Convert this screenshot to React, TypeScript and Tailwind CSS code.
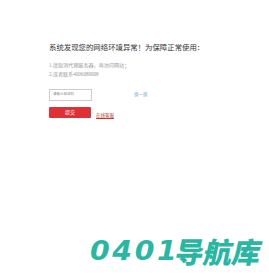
export default function App() {
  return (
    <div className="relative w-[269px] h-[274px] bg-white overflow-hidden" style={{ fontFamily: '"Liberation Serif", "Noto Sans CJK SC", serif' }}>
      <div className="pl-[49px] pt-[42px] flex flex-col">
        <div className="text-[7.4px] leading-[10px] text-[#333]" style={{ fontFamily: '"Noto Sans CJK SC", sans-serif' }}>
          系统发现您的网络环境异常！为保障正常使用：
        </div>
        <div className="mt-[9px] text-[5.1px] leading-[9px] text-[#999]">1.请取消代理服务器，再访问网站；</div>
        <div className="text-[5.1px] leading-[9px] text-[#999]">2.或者联系4006089008</div>
        <div className="mt-[10px] flex items-end">
          <div className="w-[43px] h-[12px] border border-[#ccc] flex items-center pl-[3px] text-[3.5px] text-[#888]">请输入验证码</div>
          <div className="ml-[42px] mb-[2px] text-[4.5px] text-[#7fadcc]">换一换</div>
        </div>
        <div className="mt-[6px] flex items-end">
          <div className="w-[42px] h-[11px] bg-[#df3036] rounded-[1px] flex items-center justify-center text-[5px] text-white">提交</div>
          <div className="ml-[5px] text-[4.5px] text-[#c0392b] underline leading-[6px] -mb-[1px]">在线客服</div>
        </div>
      </div>
      <div className="absolute left-[90px] top-[236px] flex items-center text-[#2bb6a3] font-black whitespace-nowrap" style={{ fontFamily: '"DejaVu Sans", "Noto Sans CJK SC", sans-serif' }}>
        <span className="text-[27px] leading-[30px] tracking-[2.5px] italic inline-block origin-left" style={{ transform: 'scaleX(1.05)' }}>0401</span>
        <span className="ml-[1px] text-[28.5px] leading-[30px] inline-block" style={{ fontFamily: '"Noto Sans CJK SC", sans-serif', fontWeight: 900, transform: 'skewX(-12deg)' }}>导航库</span>
      </div>
    </div>
  );
}
